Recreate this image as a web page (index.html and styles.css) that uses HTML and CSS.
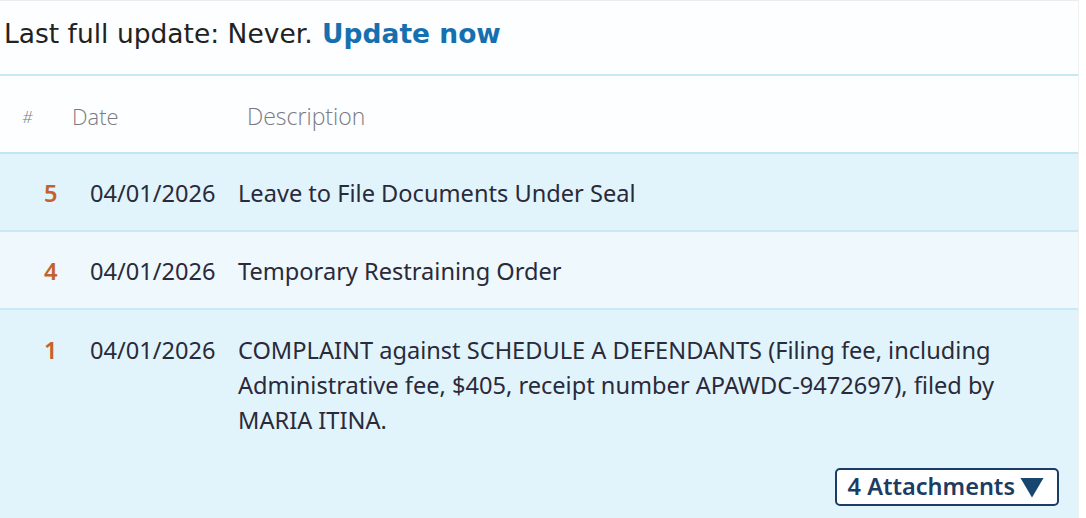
FILE: index.html
```html
<!DOCTYPE html>
<html>
<head>
<meta charset="utf-8">
<link rel="stylesheet" href="styles.css">
</head>
<body>
<div class="page">
  <div class="topbar">
    <span class="last">Last full update: Never.</span>
    <a class="update" href="#">Update now</a>
  </div>
  <div class="thead">
    <div class="h-num">#</div>
    <div class="h-date">Date</div>
    <div class="h-desc">Description</div>
  </div>
  <div class="row r5">
    <div class="num">5</div>
    <div class="date">04/01/2026</div>
    <div class="desc">Leave to File Documents Under Seal</div>
  </div>
  <div class="row r4">
    <div class="num">4</div>
    <div class="date">04/01/2026</div>
    <div class="desc">Temporary Restraining Order</div>
  </div>
  <div class="row r1">
    <div class="num">1</div>
    <div class="date">04/01/2026</div>
    <div class="desc">
      <div class="desc-text">COMPLAINT against SCHEDULE A DEFENDANTS (Filing fee, including Administrative fee, $405, receipt number APAWDC-9472697), filed by MARIA ITINA.</div>
      <div class="attach-wrap"><button class="attach">4 Attachments <svg class="tri" width="24" height="21" viewBox="0 0 24 21"><path d="M0.5 1 H23.5 L12 20.5 Z" fill="#17476e"/></svg></button></div>
    </div>
  </div>
</div>
</body>
</html>
```
FILE: styles.css
```css
html, body {
  margin: 0;
  padding: 0;
  background: #ffffff;
}
.page {
  width: 1079px;
  height: 518px;
  overflow: hidden;
  border-top: 1px solid #ececec;
  border-right: 1px solid #f0f0ee;
  background: #fcfeff;
  box-sizing: border-box;
}
.topbar {
  height: 75px;
  padding: 17px 0 0 4px;
  box-sizing: border-box;
  font-family: "DejaVu Sans", Verdana, sans-serif;
  font-size: 26.5px;
  color: #222;
  border-bottom: 2px solid #c7e8f5;
  white-space: nowrap;
}
.update {
  color: #1670b0;
  font-weight: bold;
  text-decoration: none;
  margin-left: 1px;
}
.thead {
  display: flex;
  align-items: center;
  height: 78px;
  border-bottom: 2px solid #c2e5f3;
  font-family: "Open Sans", sans-serif;
  font-weight: 300;
  font-size: 23px;
  color: #7a7a80;
  box-sizing: border-box;
  padding-top: 4px;
}
.h-num { width: 72px; padding-left: 22px; box-sizing: border-box; font-size: 17px; font-style: italic; }
.h-date { width: 175px; font-size: 22px; }
.row {
  display: flex;
  font-family: "Noto Sans", sans-serif;
  font-size: 23.6px;
  color: #2a2a3a;
  border-bottom: 2px solid #c8e9f6;
  box-sizing: border-box;
}
.r5 { background: #e1f4fc; height: 78px; align-items: center; padding-top: 2px; }
.r4 { background: #eef8fd; height: 78px; align-items: center; padding-top: 2px; }
.r1 { background: #e1f4fc; height: 220px; padding-top: 23px; border-bottom: none; line-height: 35px; }
.num {
  width: 90px;
  padding-left: 44px;
  box-sizing: border-box;
  color: #c4622a;
  font-weight: 600;
}
.date { width: 148px; }
.desc { flex: 1; padding-right: 60px; }
.r5 .desc, .r4 .desc { line-height: normal; }
.attach-wrap {
  display: flex;
  justify-content: flex-end;
  margin-top: 30px;
  margin-right: -41px;
}
.attach {
  display: flex;
  align-items: center;
  gap: 5px;
  font-family: "Noto Sans", sans-serif;
  font-size: 23.5px;
  font-weight: 600;
  color: #1b3c63;
  background: #ffffff;
  border: 2px solid #1b3c63;
  border-radius: 5px;
  height: 38px;
  padding: 0 13px 0 11px;
  line-height: 1;
}
.tri { display: block; margin-top: 1px; }
```
